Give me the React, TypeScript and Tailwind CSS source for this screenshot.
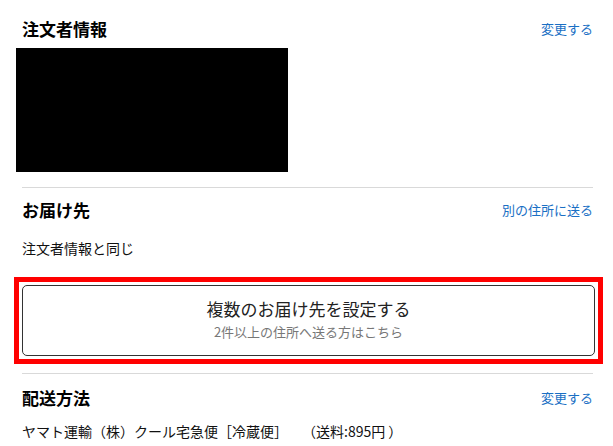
import React from "react";

const font = { fontFamily: '"Noto Sans CJK JP", "Noto Sans", sans-serif' };

function Heading({ title, link }: { title: string; link: string }) {
  return (
    <div className="flex h-[24px] items-center justify-between">
      <h2 className="text-[17px] font-bold leading-[24px] text-black">{title}</h2>
      <a className="text-[13px] leading-[18px] text-[#1a6fc4]">{link}</a>
    </div>
  );
}

export default function App() {
  return (
    <div className="w-[613px] h-[446px] overflow-hidden bg-white" style={font}>
      <div className="ml-[22px] mr-[20px] pt-[17px]">
        <Heading title="注文者情報" link="変更する" />
        <div className="-ml-[6px] mt-[7px] h-[124px] w-[272px] bg-black" />
        <div className="mt-[15px] h-px bg-[#d9d9d9]" />
        <div className="mt-[10px]">
          <Heading title="お届け先" link="別の住所に送る" />
        </div>
        <p className="mt-[16px] text-[14px] leading-[20px] text-[#111]">注文者情報と同じ</p>
      </div>
      <div className="ml-[14px] mr-[10px] mt-[19px] border-[5px] border-[#ff0000] p-[3px]">
        <button className="flex h-[71px] w-full flex-col items-center rounded-[5px] border border-[#333] bg-white pt-[12px]">
          <span className="text-[17px] leading-[22px] text-[#222]">複数のお届け先を設定する</span>
          <span className="mt-[3px] text-[13px] leading-[18px] text-[#777]">2件以上の住所へ送る方はこちら</span>
        </button>
      </div>
      <div className="ml-[22px] mr-[20px]">
        <div className="mt-[9px] h-px bg-[#d9d9d9]" />
        <div className="mt-[12px]">
          <Heading title="配送方法" link="変更する" />
        </div>
        <p className="mt-[11px] whitespace-pre text-[14px] leading-[20px] text-[#111]">
          ヤマト運輸（株）クール宅急便［冷蔵便］　　（送料:895円 ）
        </p>
      </div>
    </div>
  );
}
